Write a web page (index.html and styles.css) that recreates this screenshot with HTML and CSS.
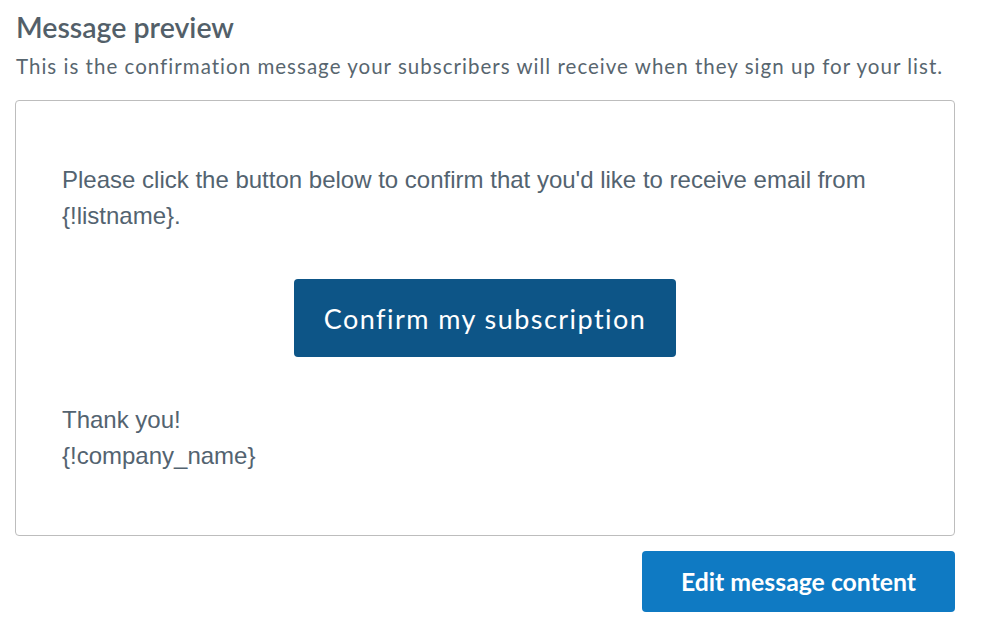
FILE: index.html
```html
<!DOCTYPE html>
<html lang="en">
<head>
<meta charset="utf-8">
<title>Message preview</title>
<link rel="stylesheet" href="styles.css">
</head>
<body>
<main class="page">
  <h2 class="title">Message preview</h2>
  <p class="subtitle">This is the confirmation message your subscribers will receive when they sign up for your list.</p>
  <section class="preview">
    <p class="msg">Please click the button below to confirm that you'd like to receive email from {!listname}.</p>
    <div class="confirm-row">
      <span class="confirm-btn">Confirm my subscription</span>
    </div>
    <p class="msg">Thank you!<br>{!company_name}</p>
  </section>
  <div class="actions">
    <button class="edit-btn" type="button">Edit message content</button>
  </div>
</main>
</body>
</html>
```

FILE: styles.css
```css
html, body {
  margin: 0;
  padding: 0;
  background: #ffffff;
}
.page {
  width: 940px;
  padding: 8px 0 0 15px;
  font-family: "Lato", "Open Sans", sans-serif;
}
.title {
  margin: 0 0 0 1px;
  font-size: 28.5px;
  line-height: 38px;
  font-weight: 600;
  color: #535f69;
}
.subtitle {
  margin: 6px 0 0 1px;
  font-size: 20.5px;
  letter-spacing: 1.02px;
  line-height: 28px;
  color: #58666f;
}
.preview {
  margin-top: 20px;
  border: 1px solid #bdbdbd;
  border-radius: 4px;
  padding: 61px 46px 61px;
  font-family: "Liberation Sans", Arial, sans-serif;
}
.msg {
  margin: 0;
  font-size: 24px;
  line-height: 36px;
  color: #536370;
}
.confirm-row {
  display: flex;
  justify-content: center;
  margin: 45px 0;
}
.confirm-btn {
  display: flex;
  align-items: center;
  justify-content: center;
  width: 382px;
  height: 78px;
  box-sizing: border-box;
  background: #0d5587;
  border-radius: 4px;
  color: #ffffff;
  font-family: "Lato", "Open Sans", sans-serif;
  font-size: 27px;
  letter-spacing: 1.45px;
}
.actions {
  display: flex;
  justify-content: flex-end;
  margin-top: 15px;
}
.edit-btn {
  width: 313px;
  height: 61px;
  border: none;
  border-radius: 4px;
  background: #0f7ac3;
  color: #ffffff;
  font-family: "Lato", "Open Sans", sans-serif;
  font-size: 24.8px;
  font-weight: 700;
  padding: 0;
}
```
